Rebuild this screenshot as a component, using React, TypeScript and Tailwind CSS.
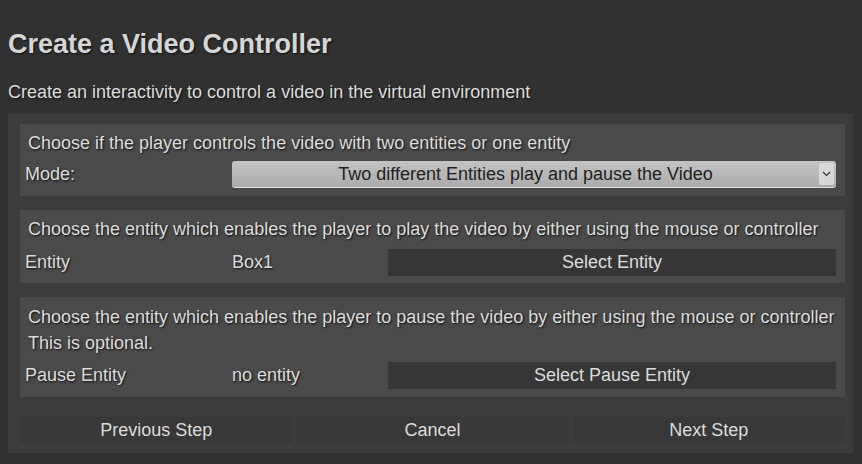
export default function App() {
  return (
    <div className="w-[862px] h-[464px] bg-[#313131] text-[#dcdcdc] font-['Liberation_Sans',Arial,sans-serif] overflow-hidden [text-shadow:1px_1px_2px_#111]">
      <div className="pl-2 pt-[28px]">
        <h1 className="text-[27px] leading-[32px] font-bold text-[#d6d6d6]">Create a Video Controller</h1>
        <p className="mt-[21px] text-[18px] leading-[22px]">
          Create an interactivity to control a video in the virtual environment
        </p>
      </div>

      <div className="ml-2 mt-[11px] w-[845px] bg-[#3c3c3c] pl-3 pr-2 pt-[10px] pb-[10px] flex flex-col">
        {/* mode */}
        <section className="bg-[#4a4a4a] pt-[6px] pb-[8px]">
          <p className="pl-2 text-[18px] leading-[26px]">
            Choose if the player controls the video with two entities or one entity
          </p>
          <div className="mt-[5px] flex items-center h-[27px] pr-[9px]">
            <span className="pl-[5px] w-[212px] text-[18px]">Mode:</span>
            <div className="flex-1 h-[27px] flex items-center rounded-[3px] bg-gradient-to-b from-[#c4c4c4] to-[#ababab] border-b border-[#e0e0e0] text-[#1e1e1e] [text-shadow:none]">
              <span className="flex-1 text-center text-[18px]">Two different Entities play and pause the Video</span>
              <span className="mr-[2px] w-[15px] h-[22px] flex items-center justify-center bg-[#d8d8d8] rounded-[2px]">
                <svg width="9" height="6" viewBox="0 0 9 6">
                  <path d="M1 1l3.5 3.5L8 1" fill="none" stroke="#333" strokeWidth="1.2" />
                </svg>
              </span>
            </div>
          </div>
        </section>

        {/* play entity */}
        <section className="mt-[14px] bg-[#4a4a4a] pt-[6px] pb-[7px]">
          <p className="pl-2 text-[18px] leading-[26px]">
            Choose the entity which enables the player to play the video by either using the mouse or controller
          </p>
          <div className="mt-[7px] flex items-center h-[27px] pr-[9px]">
            <span className="pl-[5px] w-[212px] text-[18px]">Entity</span>
            <span className="w-[156px] text-[18px]">Box1</span>
            <button className="flex-1 h-[27px] bg-[#363636] text-[18px] text-[#dcdcdc]">Select Entity</button>
          </div>
        </section>

        {/* pause entity */}
        <section className="mt-[14px] bg-[#4a4a4a] pt-[7px] pb-[8px]">
          <p className="pl-2 text-[18px] leading-[26px]">
            Choose the entity which enables the player to pause the video by either using the mouse or controller
          </p>
          <p className="pl-2 text-[18px] leading-[26px]">This is optional.</p>
          <div className="mt-[6px] flex items-center h-[27px] pr-[9px]">
            <span className="pl-[5px] w-[212px] text-[18px]">Pause Entity</span>
            <span className="w-[156px] text-[18px]">no entity</span>
            <button className="flex-1 h-[27px] bg-[#363636] text-[18px] text-[#dcdcdc]">Select Pause Entity</button>
          </div>
        </section>

        <div className="mt-[20px] grid grid-cols-3 gap-1">
          <button className="h-[26px] bg-[#383838] text-[18px] text-[#dcdcdc]">Previous Step</button>
          <button className="h-[26px] bg-[#383838] text-[18px] text-[#dcdcdc]">Cancel</button>
          <button className="h-[26px] bg-[#383838] text-[18px] text-[#dcdcdc]">Next Step</button>
        </div>
      </div>
    </div>
  );
}
